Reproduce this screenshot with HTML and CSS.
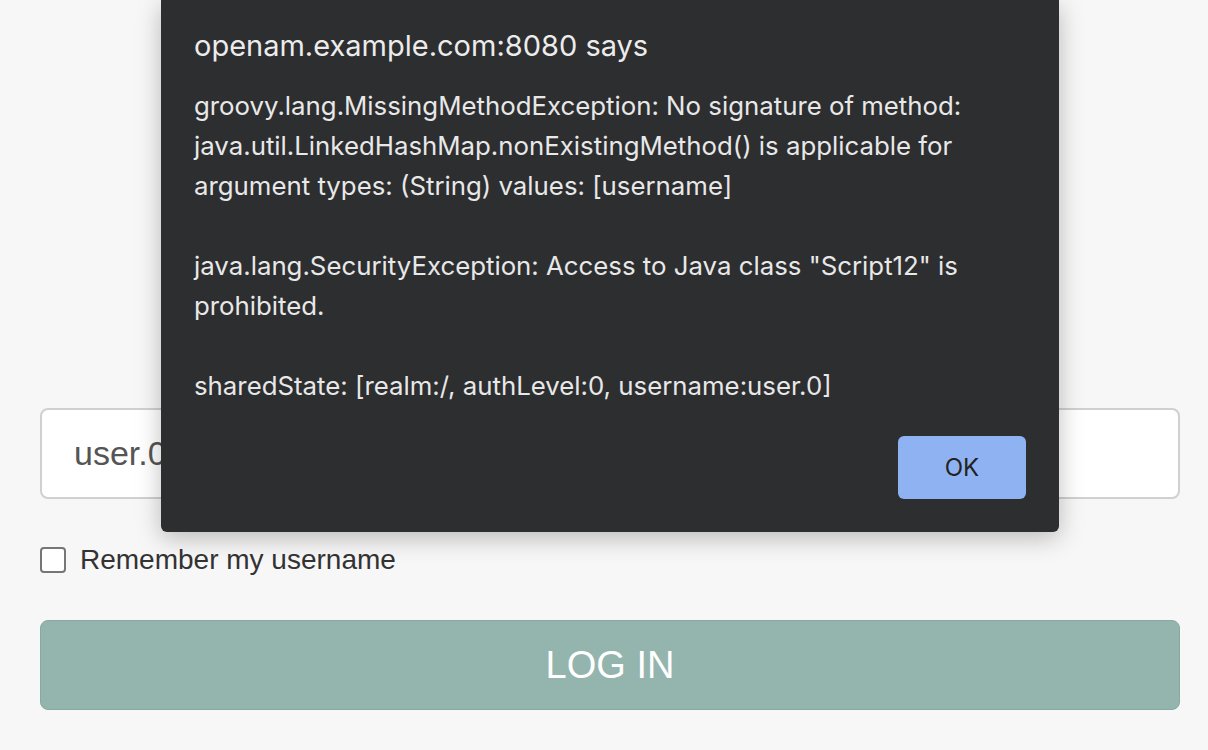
FILE: index.html
```html
<!DOCTYPE html>
<html>
<head>
<meta charset="utf-8">
<link rel="stylesheet" href="styles.css">
</head>
<body>
<div class="page">
  <form class="login">
    <div class="field"><span class="value">user.0</span></div>
    <label class="remember"><span class="box"></span><span>Remember my username</span></label>
    <button type="button" class="submit">LOG IN</button>
  </form>
</div>
<div class="dialog">
  <div class="title">openam.example.com:8080 says</div>
  <div class="message">
    <p>groovy.lang.MissingMethodException: No signature of method:<br>java.util.LinkedHashMap.nonExistingMethod() is applicable for<br>argument types: (String) values: [username]</p>
    <p>java.lang.SecurityException: Access to Java class "Script12" is<br>prohibited.</p>
    <p>sharedState: [realm:/, authLevel:0, username:user.0]</p>
  </div>
  <div class="actions"><button type="button" class="ok">OK</button></div>
</div>
</body>
</html>
```
FILE: styles.css
```css
html, body {
  margin: 0;
  padding: 0;
  background: #f7f7f7;
  height: 100%;
  overflow: hidden;
}
.page {
  padding: 408px 28px 0 40px;
  font-family: "Liberation Sans", Arial, sans-serif;
}
.login {
  display: flex;
  flex-direction: column;
}
.field {
  height: 87px;
  background: #fff;
  border: 2px solid #d0d0d0;
  border-radius: 8px;
  display: flex;
  align-items: center;
  padding-left: 32px;
}
.value {
  font-size: 34px;
  color: #555;
}
.remember {
  display: flex;
  align-items: center;
  gap: 14px;
  height: 32px;
  margin-top: 45px;
  font-size: 28px;
  color: #333;
}
.box {
  width: 22px;
  height: 22px;
  border: 2px solid #767676;
  border-radius: 4px;
  background: #fff;
  flex: none;
}
.submit {
  margin-top: 44px;
  height: 90px;
  background: #94b4ae;
  border: 1px solid #88a9a2;
  border-radius: 8px;
  color: #fff;
  font-family: "Liberation Sans", Arial, sans-serif;
  font-size: 38px;
  padding: 0;
}
.dialog {
  position: absolute;
  left: 161px;
  top: 0;
  width: 898px;
  height: 532px;
  box-sizing: border-box;
  background: #2d2e30;
  border-radius: 0 0 6px 6px;
  box-shadow: 0 6px 24px rgba(0,0,0,0.25);
  padding: 27px 33px 0 33px;
  font-family: Inter, "Noto Sans", sans-serif;
  color: #e8e8e8;
}
.title {
  font-size: 29px;
  line-height: 38px;
  color: #ececec;
}
.message {
  margin-top: 21px;
  font-size: 25.8px;
  line-height: 40px;
}
.message p {
  margin: 0 0 40px 0;
}
.message p:last-child {
  margin-bottom: 0;
}
.actions {
  display: flex;
  justify-content: flex-end;
  margin-top: 30px;
}
.ok {
  width: 128px;
  height: 63px;
  background: #8fb2f2;
  border: none;
  border-radius: 6px;
  font-family: Inter, "Noto Sans", sans-serif;
  font-size: 24px;
  color: #222;
  padding: 0;
}
```
